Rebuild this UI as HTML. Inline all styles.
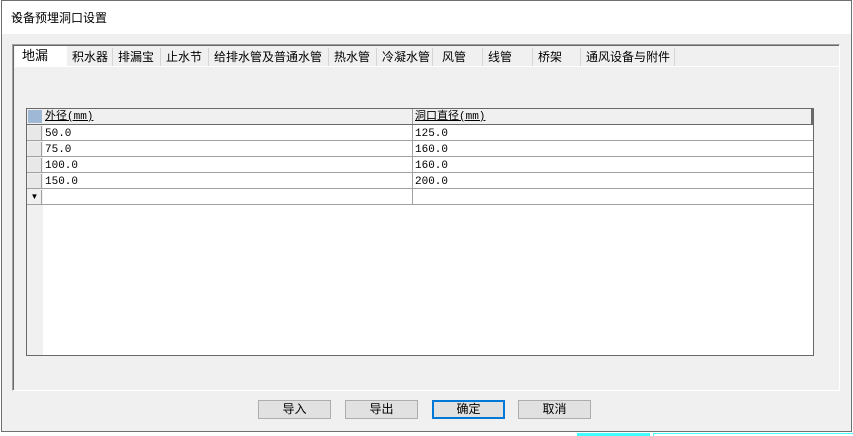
<!DOCTYPE html>
<html><head><meta charset="utf-8"><style>
*{margin:0;padding:0;box-sizing:border-box}
body{width:853px;height:436px;background:#fff;position:relative;overflow:hidden;font-family:"Liberation Sans","Noto Sans CJK SC",sans-serif;font-size:12px;color:#000}
.win{position:absolute;left:1px;top:0;width:851px;height:432px;border:1px solid #6f6f6f;background:#f0f0f0}
.title{position:absolute;left:0;top:0;width:849px;height:33px;background:#fff}
.title span{position:absolute;left:9px;top:8px;font-size:12px}
.close{position:absolute;left:824px;top:6px;font-size:18px;color:#333;font-weight:100}
.panel{position:absolute;left:12px;top:44px;width:828px;height:347px;border:1px solid #a0a0a0;border-right-color:#fff;border-bottom-color:#fff;box-shadow:inset 1px 1px 0 #696969}
.tabline{position:absolute;left:14px;top:66px;width:825px;height:1px;background:#fff}
.tab{position:absolute;top:48px;height:18px;border-right:1px solid #d5d5d5;font-size:12px;line-height:19px;padding-left:5px}
.tab.sel{background:#fff;top:46px;height:21px;border:none;font-size:13px;padding-left:7px}
.grid{position:absolute;left:26px;top:108px;width:788px;height:248px;border:1px solid #696969;background:#fff}
.rh{position:absolute;left:0;top:0;width:16px;height:246px;background:#f0f0f0}
.row{position:absolute;left:0;width:786px;height:16px;border-bottom:1px solid #a0a0a0}
.c{position:absolute;top:0;height:15px;line-height:18px;font-size:11px;font-family:"Liberation Mono","Noto Sans CJK SC",monospace;padding-left:2px;border-right:1px solid #a0a0a0}
.hdr{border-bottom:1px solid #696969;background:#f0f0f0}
.rhc{position:absolute;left:1px;top:1px;width:14px;height:14px;background:#e8e8e8;border-right:1px solid #a0a0a0}
.btn{position:absolute;top:400px;width:73px;height:19px;border:1px solid #adadad;background:#e1e1e1;text-align:center;line-height:17px;font-size:12px}
.btn.def{border:2px solid #0078d7;line-height:15px}
</style></head><body>
<div class="win">
<div class="title"><span>设备预埋洞口设置</span><span class="close">✕</span></div>
</div>
<div class="panel"></div>
<div class="tabline"></div>
<div class="tab sel" style="left:15px;width:52px">地漏</div>
<div class="tab" style="left:67px;width:46px">积水器</div>
<div class="tab" style="left:113px;width:48px">排漏宝</div>
<div class="tab" style="left:161px;width:48px">止水节</div>
<div class="tab" style="left:209px;width:120px">给排水管及普通水管</div>
<div class="tab" style="left:329px;width:48px">热水管</div>
<div class="tab" style="left:377px;width:56px">冷凝水管</div>
<div class="tab" style="left:437px;width:46px">风管</div>
<div class="tab" style="left:483px;width:50px">线管</div>
<div class="tab" style="left:533px;width:48px">桥架</div>
<div class="tab" style="left:581px;width:94px">通风设备与附件</div>
<div class="grid">
<div class="rh"></div>
<div class="row hdr" style="top:0"><div style="position:absolute;left:1px;top:1px;width:14px;height:13px;background:#9fb8d6"></div><div class="c" style="left:16px;width:370px;text-decoration:underline;line-height:16px">外径(mm)</div><div class="c" style="left:386px;width:400px;text-decoration:underline;line-height:16px;border-right:2px solid #696969">洞口直径(mm)</div></div>
<div class="row" style="top:16px"><div class="rhc"></div><div class="c" style="left:16px;width:370px">50.0</div><div class="c" style="left:386px;width:400px;border:none">125.0</div></div>
<div class="row" style="top:32px"><div class="rhc"></div><div class="c" style="left:16px;width:370px">75.0</div><div class="c" style="left:386px;width:400px;border:none">160.0</div></div>
<div class="row" style="top:48px"><div class="rhc"></div><div class="c" style="left:16px;width:370px">100.0</div><div class="c" style="left:386px;width:400px;border:none">160.0</div></div>
<div class="row" style="top:64px"><div class="rhc"></div><div class="c" style="left:16px;width:370px">150.0</div><div class="c" style="left:386px;width:400px;border:none">200.0</div></div>
<div class="row" style="top:80px"><div class="rhc" style="background:#f0f0f0;font-size:8px;line-height:14px;text-align:center">▼</div><div class="c" style="left:16px;width:370px"></div></div>
</div>
<div class="btn" style="left:258px">导入</div>
<div class="btn" style="left:345px">导出</div>
<div class="btn def" style="left:432px">确定</div>
<div class="btn" style="left:518px">取消</div>
<div style="position:absolute;left:577px;top:433px;width:73px;height:3px;background:#40ffff"></div>
<div style="position:absolute;left:653px;top:433px;width:200px;height:3px;border-left:1px solid #40ffff;border-top:1px solid #40ffff"></div>
</body></html>
